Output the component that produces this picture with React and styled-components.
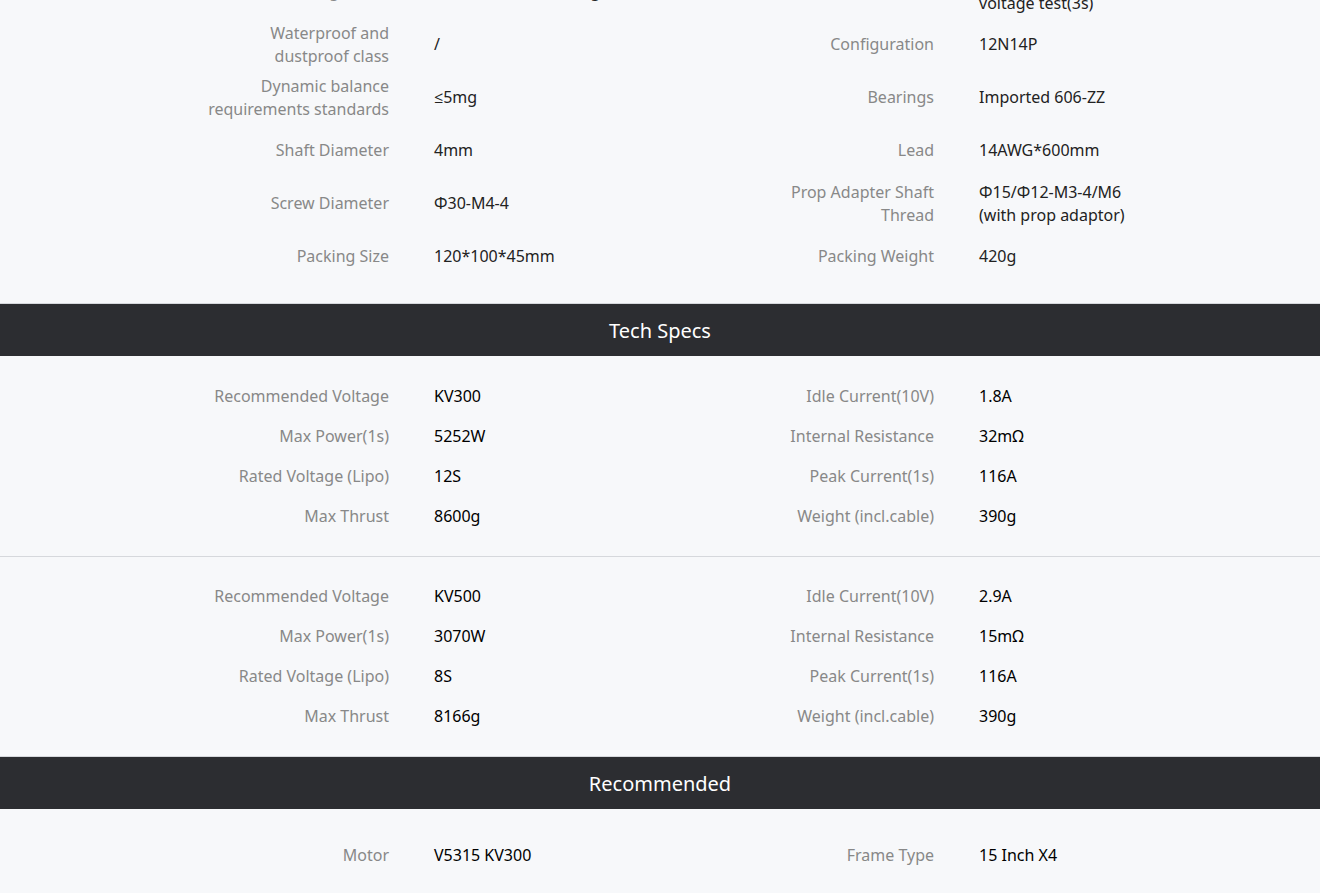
import React from "react"
import styled, { createGlobalStyle } from "styled-components"

const GlobalStyle = createGlobalStyle`
  html, body {
    margin: 0;
    padding: 0;
    background: #f7f8fa;
    overflow: hidden;
  }
  body {
    font-family: "Noto Sans", "Open Sans", "Liberation Sans", sans-serif;
    -webkit-font-smoothing: antialiased;
  }
`

// page is shown scrolled a little past the top of the spec table
const Page = styled.div`
  margin-top: -35px;
  background: #f7f8fa;
`

const Section = styled.section`
  padding: ${(props) => props.$pad || "20px 0"};
`

const Block = styled.div`
  padding: 20px 0;

  & + & {
    border-top: 1px solid #d6d8dc;
    padding-top: 19px;
  }
`

const Grid = styled.div`
  width: 1090px;
  margin: 0 auto;
  display: grid;
  grid-template-columns: 545px 545px;
`

const Item = styled.div`
  display: grid;
  grid-template-columns: 274px 1fr;
  column-gap: 45px;
  align-items: center;
  height: ${(props) => (props.$compact ? "40px" : "53px")};
  font-size: 16px;
  line-height: 23px;
`

const Label = styled.div`
  justify-self: end;
  max-width: 190px;
  text-align: right;
  color: #888;
`

const Value = styled.div`
  color: ${(props) => (props.$dark ? "#000" : "#222")};
`

const Bar = styled.h2`
  margin: 0;
  height: 52px;
  border-top: 1px solid #d6d8dc;
  background: #2c2d31;
  color: #fff;
  font-size: 20px;
  font-weight: 400;
  display: flex;
  align-items: center;
  justify-content: center;
`

const br = (a, b) => (
  <>
    {a}
    <br />
    {b}
  </>
)

const basic = [
  ["Wiring Grade", "Concentrated winding", "Insulation Test", br("Passed 500V high", "voltage test(3s)")],
  [br("Waterproof and", "dustproof class"), "/", "Configuration", "12N14P"],
  [br("Dynamic balance", "requirements standards"), "≤5mg", "Bearings", "Imported 606-ZZ"],
  ["Shaft Diameter", "4mm", "Lead", "14AWG*600mm"],
  [
    "Screw Diameter",
    "Φ30-M4-4",
    br("Prop Adapter Shaft", "Thread"),
    br("Φ15/Φ12-M3-4/M6", "(with prop adaptor)"),
  ],
  ["Packing Size", "120*100*45mm", "Packing Weight", "420g"],
]

const techBlocks = [
  [
    ["Recommended Voltage", "KV300", "Idle Current(10V)", "1.8A"],
    ["Max Power(1s)", "5252W", "Internal Resistance", "32mΩ"],
    ["Rated Voltage (Lipo)", "12S", "Peak Current(1s)", "116A"],
    ["Max Thrust", "8600g", "Weight (incl.cable)", "390g"],
  ],
  [
    ["Recommended Voltage", "KV500", "Idle Current(10V)", "2.9A"],
    ["Max Power(1s)", "3070W", "Internal Resistance", "15mΩ"],
    ["Rated Voltage (Lipo)", "8S", "Peak Current(1s)", "116A"],
    ["Max Thrust", "8166g", "Weight (incl.cable)", "390g"],
  ],
]

const recommended = [["Motor", "V5315 KV300", "Frame Type", "15 Inch X4"]]

const Rows = ({ rows, compact, dark }) => (
  <Grid>
    {rows.map((row, i) => (
      <React.Fragment key={i}>
        <Item $compact={compact}>
          <Label>{row[0]}</Label>
          <Value $dark={dark}>{row[1]}</Value>
        </Item>
        <Item $compact={compact}>
          <Label>{row[2]}</Label>
          <Value $dark={dark}>{row[3]}</Value>
        </Item>
      </React.Fragment>
    ))}
  </Grid>
)

const App = () => {
  return (
    <Page>
      <GlobalStyle />
      <Section $pad="0 0 20px">
        <Rows rows={basic} />
      </Section>
      <Bar>Tech Specs</Bar>
      <section>
        {techBlocks.map((rows, i) => (
          <Block key={i}>
            <Rows rows={rows} compact dark />
          </Block>
        ))}
      </section>
      <Bar>Recommended</Bar>
      <Section>
        <Rows rows={recommended} dark />
      </Section>
    </Page>
  )
}

export default App
